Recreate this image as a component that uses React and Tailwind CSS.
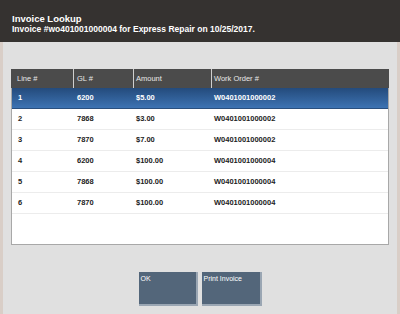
import React from 'react';

const rows = [
    { line: '1', gl: '6200', amount: '$5.00', wo: 'W0401001000002' },
    { line: '2', gl: '7868', amount: '$3.00', wo: 'W0401001000002' },
    { line: '3', gl: '7870', amount: '$7.00', wo: 'W0401001000002' },
    { line: '4', gl: '6200', amount: '$100.00', wo: 'W0401001000004' },
    { line: '5', gl: '7868', amount: '$100.00', wo: 'W0401001000004' },
    { line: '6', gl: '7870', amount: '$100.00', wo: 'W0401001000004' },
];

const App = () => {
    return (
        <div className="w-[400px] h-[314px] flex flex-col font-['Liberation_Sans',Arial,sans-serif] overflow-hidden">
            {/* Title bar */}
            <div className="h-[42px] shrink-0 bg-[#353230] px-[12px] pt-[13px] text-white font-bold">
                <div className="text-[9.5px] leading-[11px]">Invoice Lookup</div>
                <div className="text-[8.5px] leading-[10px]">Invoice #wo401001000004 for Express Repair on 10/25/2017.</div>
            </div>

            {/* Body */}
            <div className="flex-1 flex flex-col bg-[#e0e0e0] border-x-[3px] border-[#d9cec7] px-[8px] pt-[27px]">
                <div className="w-[378px] h-[176px] flex flex-col">
                    {/* Column headings */}
                    <div className="h-[19px] shrink-0 grid grid-cols-[62px_60px_78px_178px] bg-[#4b4b4b] text-[#e8e8e8] text-[7.5px]">
                        <div className="flex items-center pl-[6px]">Line #</div>
                        <div className="flex items-center pl-[3px] border-l border-[#cfcfcf]">GL #</div>
                        <div className="flex items-center pl-[2px] border-l border-[#cfcfcf]">Amount</div>
                        <div className="flex items-center pl-[2px] border-l border-[#cfcfcf]">Work Order #</div>
                    </div>

                    <div className="flex-1 bg-white border-x border-b border-[#a8a8a8]">
                        {rows.map((r, i) => (
                            <div
                                key={r.line}
                                className={
                                    i === 0
                                        ? 'h-[21px] grid grid-cols-[61px_60px_78px_177px] items-center text-[7.5px] font-bold text-white bg-gradient-to-b from-[#244b7c] to-[#3d73b3] border-b border-[#2a4f7e]'
                                        : 'h-[21px] grid grid-cols-[61px_60px_78px_177px] items-center text-[7.5px] font-bold text-[#222] border-b border-[#ececec]'
                                }
                            >
                                <div className="pl-[6px]">{r.line}</div>
                                <div className="pl-[4px]">{r.gl}</div>
                                <div className="pl-[3px]">{r.amount}</div>
                                <div className="pl-[3px]">{r.wo}</div>
                            </div>
                        ))}
                    </div>
                </div>

                {/* Actions */}
                <div className="mt-[27px] flex justify-center gap-[4px]">
                    <button className="w-[59px] h-[34px] bg-[#53667a] border-r-2 border-b-2 border-[#9aa6b3] text-white text-[7px] text-left align-top flex items-start px-[2px] pt-[2px]">
                        OK
                    </button>
                    <button className="w-[60px] h-[34px] bg-[#53667a] border-r-2 border-b-2 border-[#9aa6b3] text-white text-[7px] text-left flex items-start px-[2px] pt-[2px]">
                        Print Invoice
                    </button>
                </div>
            </div>
        </div>
    );
};

export default App;
